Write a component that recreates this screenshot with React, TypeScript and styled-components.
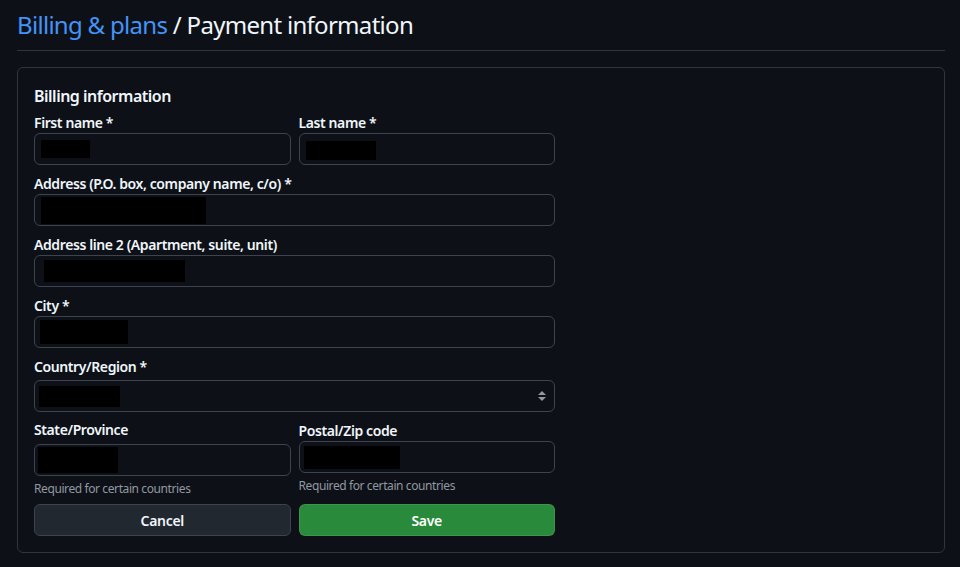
import React from "react";
import styled, { createGlobalStyle } from "styled-components";

const GlobalStyle = createGlobalStyle`
  html, body {
    margin: 0;
    padding: 0;
    background: #0d1117;
  }
  body {
    font-family: "Noto Sans", "Liberation Sans", sans-serif;
    color: #f0f6fc;
  }
  * { box-sizing: border-box; }
`;

const Page = styled.div`
  padding: 0 15px 0 17px;
`;

const Header = styled.div`
  height: 50px;
  display: flex;
  align-items: center;
  border-bottom: 1px solid #30363d;
  box-sizing: content-box;
`;

const Title = styled.h1`
  margin: 0;
  font-size: 24px;
  font-weight: 400;
  line-height: 32px;
  letter-spacing: -0.7px;
  color: #f0f6fc;
`;

const Crumb = styled.a`
  color: #4493f8;
  text-decoration: none;
`;

const Box = styled.div`
  margin-top: 16px;
  border: 1px solid #30363d;
  border-radius: 6px;
  padding: 16px;
`;

const Form = styled.div`
  width: 521px;
`;

const Heading = styled.h2`
  margin: 0 0 5px;
  font-size: 16px;
  font-weight: 600;
  line-height: 24px;
  letter-spacing: -0.5px;
`;

const Field = styled.div<{ $mb?: number; $mt?: number }>`
  display: flex;
  flex-direction: column;
  margin-top: ${(p) => p.$mt ?? 0}px;
  margin-bottom: ${(p) => p.$mb ?? 9}px;
`;

const Label = styled.label<{ $gap?: number }>`
  display: block;
  font-size: 14px;
  font-weight: 600;
  line-height: 20px;
  letter-spacing: -0.4px;
  margin-bottom: ${(p) => p.$gap ?? 0}px;
`;

const Input = styled.div`
  height: 32px;
  border: 1px solid #3d444d;
  border-radius: 6px;
  background: #0d1117;
  display: flex;
  align-items: center;
  position: relative;
`;

const Redact = styled.span<{ $x: number; $w: number; $h: number; $dy?: number }>`
  display: block;
  background: #000;
  margin-left: ${(p) => p.$x - 1}px;
  width: ${(p) => p.$w}px;
  height: ${(p) => p.$h}px;
  margin-top: ${(p) => (p.$dy ?? 0) * 2}px;
`;

const SelectArrow = styled.svg`
  position: absolute;
  right: 7px;
  top: 50%;
  transform: translateY(-50%);
`;

const Row = styled.div<{ $mb?: number }>`
  display: grid;
  grid-template-columns: 1fr 1fr;
  column-gap: 8px;
  align-items: start;
  margin-bottom: ${(p) => p.$mb ?? 0}px;
`;

const Help = styled.div`
  margin-top: 4px;
  font-size: 12px;
  line-height: 18px;
  letter-spacing: -0.4px;
  color: #9198a1;
`;

const Button = styled.button<{ $primary?: boolean }>`
  height: 32px;
  border-radius: 6px;
  font-family: inherit;
  font-size: 14px;
  font-weight: 600;
  letter-spacing: -0.3px;
  cursor: pointer;
  border: 1px solid ${(p) => (p.$primary ? "rgba(240,246,252,0.1)" : "#3d444d")};
  background: ${(p) => (p.$primary ? "#298a3b" : "#212830")};
  color: ${(p) => (p.$primary ? "#ffffff" : "#f0f6fc")};
`;

type Box2 = { x: number; w: number; h: number; dy?: number };

function TextField({ label, r, gap, mb, mt }: { label: string; r: Box2; gap?: number; mb?: number; mt?: number }) {
  return (
    <Field $mb={mb} $mt={mt}>
      <Label $gap={gap}>{label}</Label>
      <Input>
        <Redact $x={r.x} $w={r.w} $h={r.h} $dy={r.dy} />
      </Input>
    </Field>
  );
}

export default function App() {
  return (
    <>
      <GlobalStyle />
      <Page>
        <Header>
          <Title>
            <Crumb href="#">Billing &amp; plans</Crumb> / Payment information
          </Title>
        </Header>
        <Box>
          <Form>
            <Heading>Billing information</Heading>
            <Row $mb={9}>
              <TextField label="First name *" r={{ x: 7, w: 49, h: 18 }} mb={0} />
              <TextField label="Last name *" r={{ x: 7, w: 70, h: 19, dy: 1 }} mb={0} />
            </Row>
            <TextField label="Address (P.O. box, company name, c/o) *" r={{ x: 7, w: 165, h: 27 }} />
            <TextField label="Address line 2 (Apartment, suite, unit)" r={{ x: 10, w: 141, h: 22 }} />
            <TextField label="City *" r={{ x: 6, w: 88, h: 24 }} />
            <Field $mb={8}>
              <Label $gap={3}>Country/Region *</Label>
              <Input>
                <Redact $x={5} $w={81} $h={21} />
                <SelectArrow width="10" height="12" viewBox="0 0 10 12">
                  <path d="M5 1 L9 5 L1 5 Z" fill="#9198a1" />
                  <path d="M1 7 L9 7 L5 11 Z" fill="#9198a1" />
                </SelectArrow>
              </Input>
            </Field>
            <Row $mb={6}>
              <Field $mb={0}>
                <Label $gap={4}>State/Province</Label>
                <Input>
                  <Redact $x={4} $w={80} $h={26} />
                </Input>
                <Help>Required for certain countries</Help>
              </Field>
              <Field $mb={0} $mt={1}>
                <Label>Postal/Zip code</Label>
                <Input>
                  <Redact $x={5} $w={96} $h={23} />
                </Input>
                <Help>Required for certain countries</Help>
              </Field>
            </Row>
            <Row>
              <Button>Cancel</Button>
              <Button $primary>Save</Button>
            </Row>
          </Form>
        </Box>
      </Page>
    </>
  );
}
